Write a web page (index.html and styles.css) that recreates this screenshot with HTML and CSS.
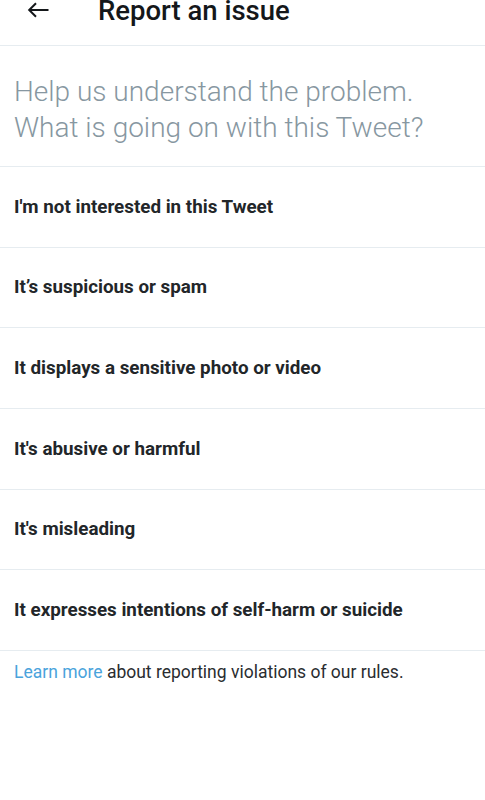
FILE: index.html
```html
<!DOCTYPE html>
<html lang="en">
<head>
  <meta charset="UTF-8">
  <meta name="viewport" content="width=device-width, initial-scale=1.0">
  <link rel="stylesheet" href="styles.css">
  <title>Report an issue</title>
</head>
<body>
  <div class="header">
    <span class="back">
      <svg width="22" height="16" viewBox="0 0 22 16"><path d="M21.5 8H2.5M9 1.2L2.2 8 9 14.8" fill="none" stroke="#14171a" stroke-width="2"/></svg>
    </span>
    <h1>Report an issue</h1>
  </div>
  <div class="intro">
    <p>Help us understand the problem.<br>What is going on with this Tweet?</p>
  </div>
  <ul class="options">
    <li>I'm not interested in this Tweet</li>
    <li>It’s suspicious or spam</li>
    <li>It displays a sensitive photo or video</li>
    <li>It's abusive or harmful</li>
    <li>It's misleading</li>
    <li>It expresses intentions of self-harm or suicide</li>
  </ul>
  <div class="footer">
    <a href="#">Learn more</a> about reporting violations of our rules.
  </div>
</body>
</html>
```

FILE: styles.css
```css
body {
  margin: 0;
  padding: 0;
  font-family: Roboto, "Liberation Sans", sans-serif;
  background-color: #fff;
  color: #14171a;
}

.header {
  display: flex;
  align-items: flex-start;
  height: 46px;
  box-sizing: border-box;
  padding-left: 27px;
  border-bottom: 1px solid #e6ecf0;
}

.back {
  display: flex;
  align-items: center;
  height: 20px;
  width: 22px;
  margin-right: 49px;
}

.header h1 {
  margin: 0;
  font-size: 27.5px;
  font-weight: 500;
  line-height: 21px;
}

.intro {
  padding: 28px 14px 20px;
  border-bottom: 1px solid #e6ecf0;
}

.intro p {
  margin: 0;
  font-size: 28px;
  font-weight: 300;
  line-height: 36px;
  color: #8797a1;
}

.options {
  list-style: none;
  margin: 0;
  padding: 0;
}

.options li {
  display: flex;
  align-items: center;
  height: 79.67px;
  padding: 0 14px;
  border-bottom: 1px solid #e6ecf0;
  font-size: 18.8px;
  font-weight: 700;
  color: #222629;
}

.footer {
  padding: 11px 14px;
  font-size: 17.5px;
  line-height: 20px;
  color: #2a2d30;
}

.footer a {
  color: #4aa3dc;
  text-decoration: none;
}
```
